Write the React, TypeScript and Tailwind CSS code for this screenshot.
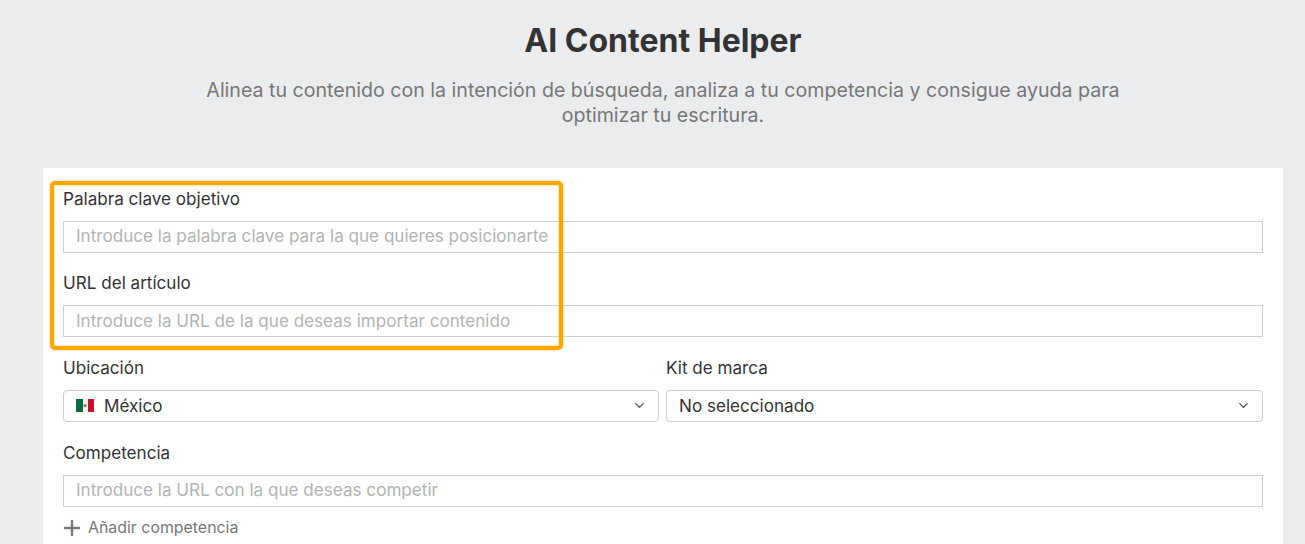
import { ChevronDown, Plus } from "lucide-react";

function Field({ label, placeholder }: { label: string; placeholder: string }) {
  return (
    <div>
      <div className="text-[17.1px] leading-6 text-[#333]">{label}</div>
      <div className="mt-[10px] flex h-8 items-center border border-[#cfcfcf] bg-white pb-[2px] pl-[12px] text-[17.1px] text-[#b3b3b3]">
        {placeholder}
      </div>
    </div>
  );
}

function SelectBox({ label, children }: { label: string; children: React.ReactNode }) {
  return (
    <div>
      <div className="text-[17.1px] leading-6 text-[#333]">{label}</div>
      <div className="mt-[10px] flex h-8 items-center justify-between rounded-[4px] border border-[#cfcfcf] bg-white pl-[12px] pr-[11px] text-[17.1px] text-[#333]">
        <div className="flex items-center">{children}</div>
        <ChevronDown size={15} strokeWidth={2.25} className="text-[#555]" />
      </div>
    </div>
  );
}

function MexicoFlag() {
  return (
    <svg width="18" height="13" viewBox="0 0 18 13" className="mr-[10px]">
      <rect width="7" height="13" fill="#0b6b3f" />
      <rect x="7" width="5" height="13" fill="#f4f4f4" />
      <rect x="12" width="6" height="13" fill="#c8102e" />
      <circle cx="9" cy="6.5" r="1.5" fill="#8a6a3a" />
    </svg>
  );
}

export default function App() {
  return (
    <div className="relative h-[544px] overflow-hidden bg-[#ebecee] font-['Inter',sans-serif]">
      <div className="ml-[43px] mr-[22px]">
        <h1 className="pt-[21px] text-center text-[32px] font-bold leading-10 text-[#333]">AI Content Helper</h1>
        <p className="mx-auto mt-[17px] w-[960px] text-center text-[19.6px] leading-[25px] text-[#777]">
          Alinea tu contenido con la intención de búsqueda, analiza a tu competencia y consigue ayuda para optimizar tu escritura.
        </p>

        <div className="mt-[40px] bg-white px-5 pt-[19px] pb-5">
          <div className="flex flex-col gap-[18.45px]">
            <Field label="Palabra clave objetivo" placeholder="Introduce la palabra clave para la que quieres posicionarte" />
            <Field label="URL del artículo" placeholder="Introduce la URL de la que deseas importar contenido" />
            <div className="grid grid-cols-[596px_1fr] gap-[7px]">
              <SelectBox label="Ubicación">
                <MexicoFlag />
                México
              </SelectBox>
              <SelectBox label="Kit de marca">No seleccionado</SelectBox>
            </div>
            <div className="mt-px">
              <Field label="Competencia" placeholder="Introduce la URL con la que deseas competir" />
              <div className="mt-[9px] flex items-center text-[15.9px] leading-6 text-[#777]">
                <Plus size={24} strokeWidth={2.5} className="mr-[4px] -ml-[3px] text-[#777]" />
                Añadir competencia
              </div>
            </div>
          </div>
        </div>
      </div>

      {/* Orange highlight over the first two fields */}
      <div className="absolute left-[50px] top-[181px] h-[169px] w-[513px] rounded-[5px] border-4 border-[#ffa600] shadow-[0_0_2px_rgba(255,166,0,0.8),inset_0_0_2px_rgba(255,166,0,0.8)]" />
    </div>
  );
}
